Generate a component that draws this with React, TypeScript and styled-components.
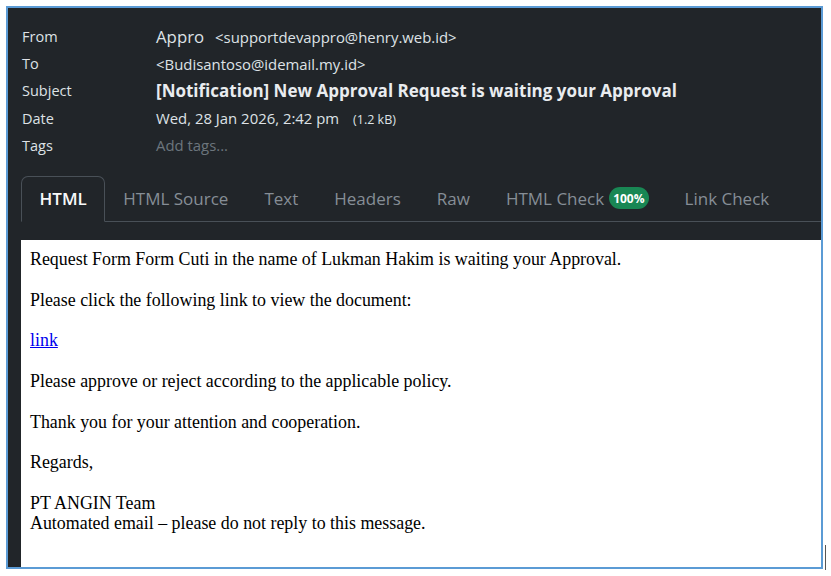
import React from 'react';
import styled, { createGlobalStyle } from 'styled-components';

const GlobalStyle = createGlobalStyle`
  body {
    margin: 0;
    background: #ffffff;
  }
`;

interface HeaderRow {
  label: string;
  kind: 'from' | 'plain' | 'subject' | 'date' | 'tags';
}

const rows: HeaderRow[] = [
  { label: 'From', kind: 'from' },
  { label: 'To', kind: 'plain' },
  { label: 'Subject', kind: 'subject' },
  { label: 'Date', kind: 'date' },
  { label: 'Tags', kind: 'tags' },
];

const tabs = ['HTML', 'HTML Source', 'Text', 'Headers', 'Raw', 'HTML Check', 'Link Check'];

function RowValue({ kind }: { kind: HeaderRow['kind'] }) {
  switch (kind) {
    case 'from':
      return (
        <Value>
          <SenderName>Appro</SenderName>
          <Address>&lt;supportdevappro@henry.web.id&gt;</Address>
        </Value>
      );
    case 'plain':
      return <Value>&lt;Budisantoso@idemail.my.id&gt;</Value>;
    case 'subject':
      return <SubjectValue>[Notification] New Approval Request is waiting your Approval</SubjectValue>;
    case 'date':
      return (
        <Value>
          Wed, 28 Jan 2026, 2:42 pm
          <Size>(1.2 kB)</Size>
        </Value>
      );
    default:
      return <Placeholder>Add tags...</Placeholder>;
  }
}

export default function App() {
  return (
    <>
      <GlobalStyle />
      <Frame>
        <Header>
          {rows.map((row) => (
            <React.Fragment key={row.label}>
              <Label>{row.label}</Label>
              <RowValue kind={row.kind} />
            </React.Fragment>
          ))}
        </Header>

        <TabBar>
          {tabs.map((tab) => (
            <Tab key={tab} active={tab === 'HTML'}>
              {tab}
              {tab === 'HTML Check' && <Badge>100%</Badge>}
            </Tab>
          ))}
          <TabFiller />
        </TabBar>

        <MessageBody>
          Request Form Form Cuti in the name of Lukman Hakim is waiting your Approval.
          <br />
          <br />
          Please click the following link to view the document:
          <br />
          <br />
          <a href="#">link</a>
          <br />
          <br />
          Please approve or reject according to the applicable policy.
          <br />
          <br />
          Thank you for your attention and cooperation.
          <br />
          <br />
          Regards,
          <br />
          <br />
          PT ANGIN Team
          <br />
          Automated email – please do not reply to this message.
        </MessageBody>
      </Frame>
      <EdgeMark />
    </>
  );
}

const Frame = styled.div`
  box-sizing: border-box;
  margin: 6px 0 0 6px;
  width: 817px;
  height: 563px;
  border: 2px solid #5b9bd5;
  background: #212529;
  display: flex;
  flex-direction: column;
  overflow: hidden;
  font-family: 'Open Sans', 'Noto Sans', sans-serif;
  color: #dee2e6;
`;

const Header = styled.div`
  display: grid;
  grid-template-columns: 134px 1fr;
  grid-auto-rows: 27.2px;
  align-items: center;
  padding: 15px 0 0 14px;
`;

const Label = styled.div`
  font-size: 14.5px;
  color: #dee2e6;
`;

const Value = styled.div`
  font-size: 14.9px;
  color: #dee2e6;
  white-space: nowrap;
`;

const SenderName = styled.span`
  font-size: 16.8px;
  margin-right: 11px;
`;

const Address = styled.span`
  font-size: 14.9px;
`;

const SubjectValue = styled.div`
  font-size: 17px;
  font-weight: 700;
  color: #e9ecef;
  white-space: nowrap;
`;

const Size = styled.span`
  font-size: 12.5px;
  margin-left: 14px;
`;

const Placeholder = styled.div`
  font-size: 14.9px;
  color: #6c757d;
`;

const TabBar = styled.div`
  display: flex;
  margin: 17px 0 0 13px;
  height: 46px;
`;

const Tab = styled.div<{ active?: boolean }>`
  box-sizing: border-box;
  display: flex;
  align-items: center;
  gap: 5px;
  padding: 0 ${({ active }) => (active ? '17.5px' : '18px')};
  font-size: 17px;
  white-space: nowrap;
  color: ${({ active }) => (active ? '#f8f9fa' : '#868e96')};
  font-weight: ${({ active }) => (active ? 600 : 400)};
  border: ${({ active }) => (active ? '1px solid #495057' : 'none')};
  border-bottom: ${({ active }) => (active ? '1px solid transparent' : '1px solid #495057')};
  border-radius: ${({ active }) => (active ? '7px 7px 0 0' : '0')};
`;

const TabFiller = styled.div`
  flex: 1;
  border-bottom: 1px solid #495057;
`;

const Badge = styled.span`
  display: inline-flex;
  align-items: center;
  height: 22px;
  padding: 0 4px;
  border-radius: 11px;
  background: #198754;
  color: #ffffff;
  font-size: 12px;
  font-weight: 700;
`;

const MessageBody = styled.div`
  flex: 1;
  margin: 18px 0 0 13px;
  padding: 9px 9px;
  background: #ffffff;
  color: #000000;
  font-family: 'Liberation Serif', 'Times New Roman', serif;
  font-size: 17.9px;
  line-height: 20.35px;

  a {
    color: #0000ee;
  }
`;

const EdgeMark = styled.div`
  position: absolute;
  left: 825px;
  top: 545px;
  width: 1px;
  height: 25px;
  background: #555555;
`;
